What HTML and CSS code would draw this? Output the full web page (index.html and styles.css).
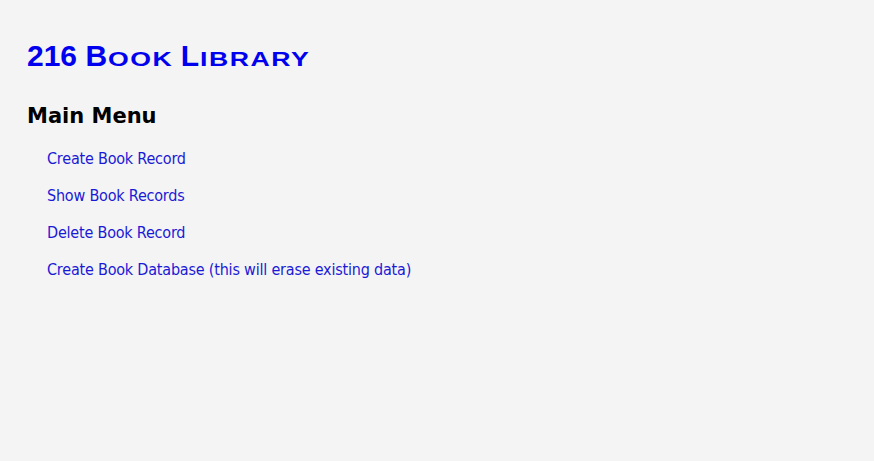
FILE: index.html
```html
<!DOCTYPE html>
<html>
<head>
<meta charset="utf-8">
<link rel="stylesheet" href="styles.css">
</head>
<body>
<div class="page">
  <h1 class="title">216 B<span class="sc sc-ook">ook</span> L<span class="sc sc-ibrary">ibrary</span></h1>
  <h2 class="subtitle">Main Menu</h2>
  <ul class="menu">
    <li><a href="#">Create Book Record</a></li>
    <li><a href="#">Show Book Records</a></li>
    <li><a href="#">Delete Book Record</a></li>
    <li><a href="#">Create Book Database (this will erase existing data)</a></li>
  </ul>
</div>
</body>
</html>
```
FILE: styles.css
```css
html, body {
  margin: 0;
  padding: 0;
  background: #f4f4f4;
}
.page {
  padding: 38px 27px;
  display: flex;
  flex-direction: column;
  align-items: flex-start;
}
.title {
  margin: 0;
  font-family: "Liberation Sans", Arial, sans-serif;
  font-weight: bold;
  font-size: 30px;
  line-height: 36px;
  color: #0000ee;
  white-space: nowrap;
}
.title .sc {
  display: inline-block;
  text-transform: uppercase;
  font-size: 21px;
  letter-spacing: 1.2px;
  transform: scaleX(1.27);
  transform-origin: left center;
  margin-left: 1px;
}
.title .sc-ook {
  margin-right: 13px;
}
.title .sc-ibrary {
  margin-right: 24px;
}
.subtitle {
  margin: 26px 0 0 0;
  font-family: "DejaVu Sans", sans-serif;
  font-weight: bold;
  font-size: 21px;
  line-height: 26px;
  color: #000;
}
.menu {
  list-style: none;
  margin: 20px 0 0 0;
  padding: 0 0 0 20px;
  display: flex;
  flex-direction: column;
  gap: 18px;
}
.menu li {
  line-height: 19px;
}
.menu a {
  font-family: "DejaVu Sans Condensed", "DejaVu Sans", sans-serif;
  font-size: 16px;
  letter-spacing: -0.2px;
  color: #1a1ad6;
  text-decoration: none;
}
```
